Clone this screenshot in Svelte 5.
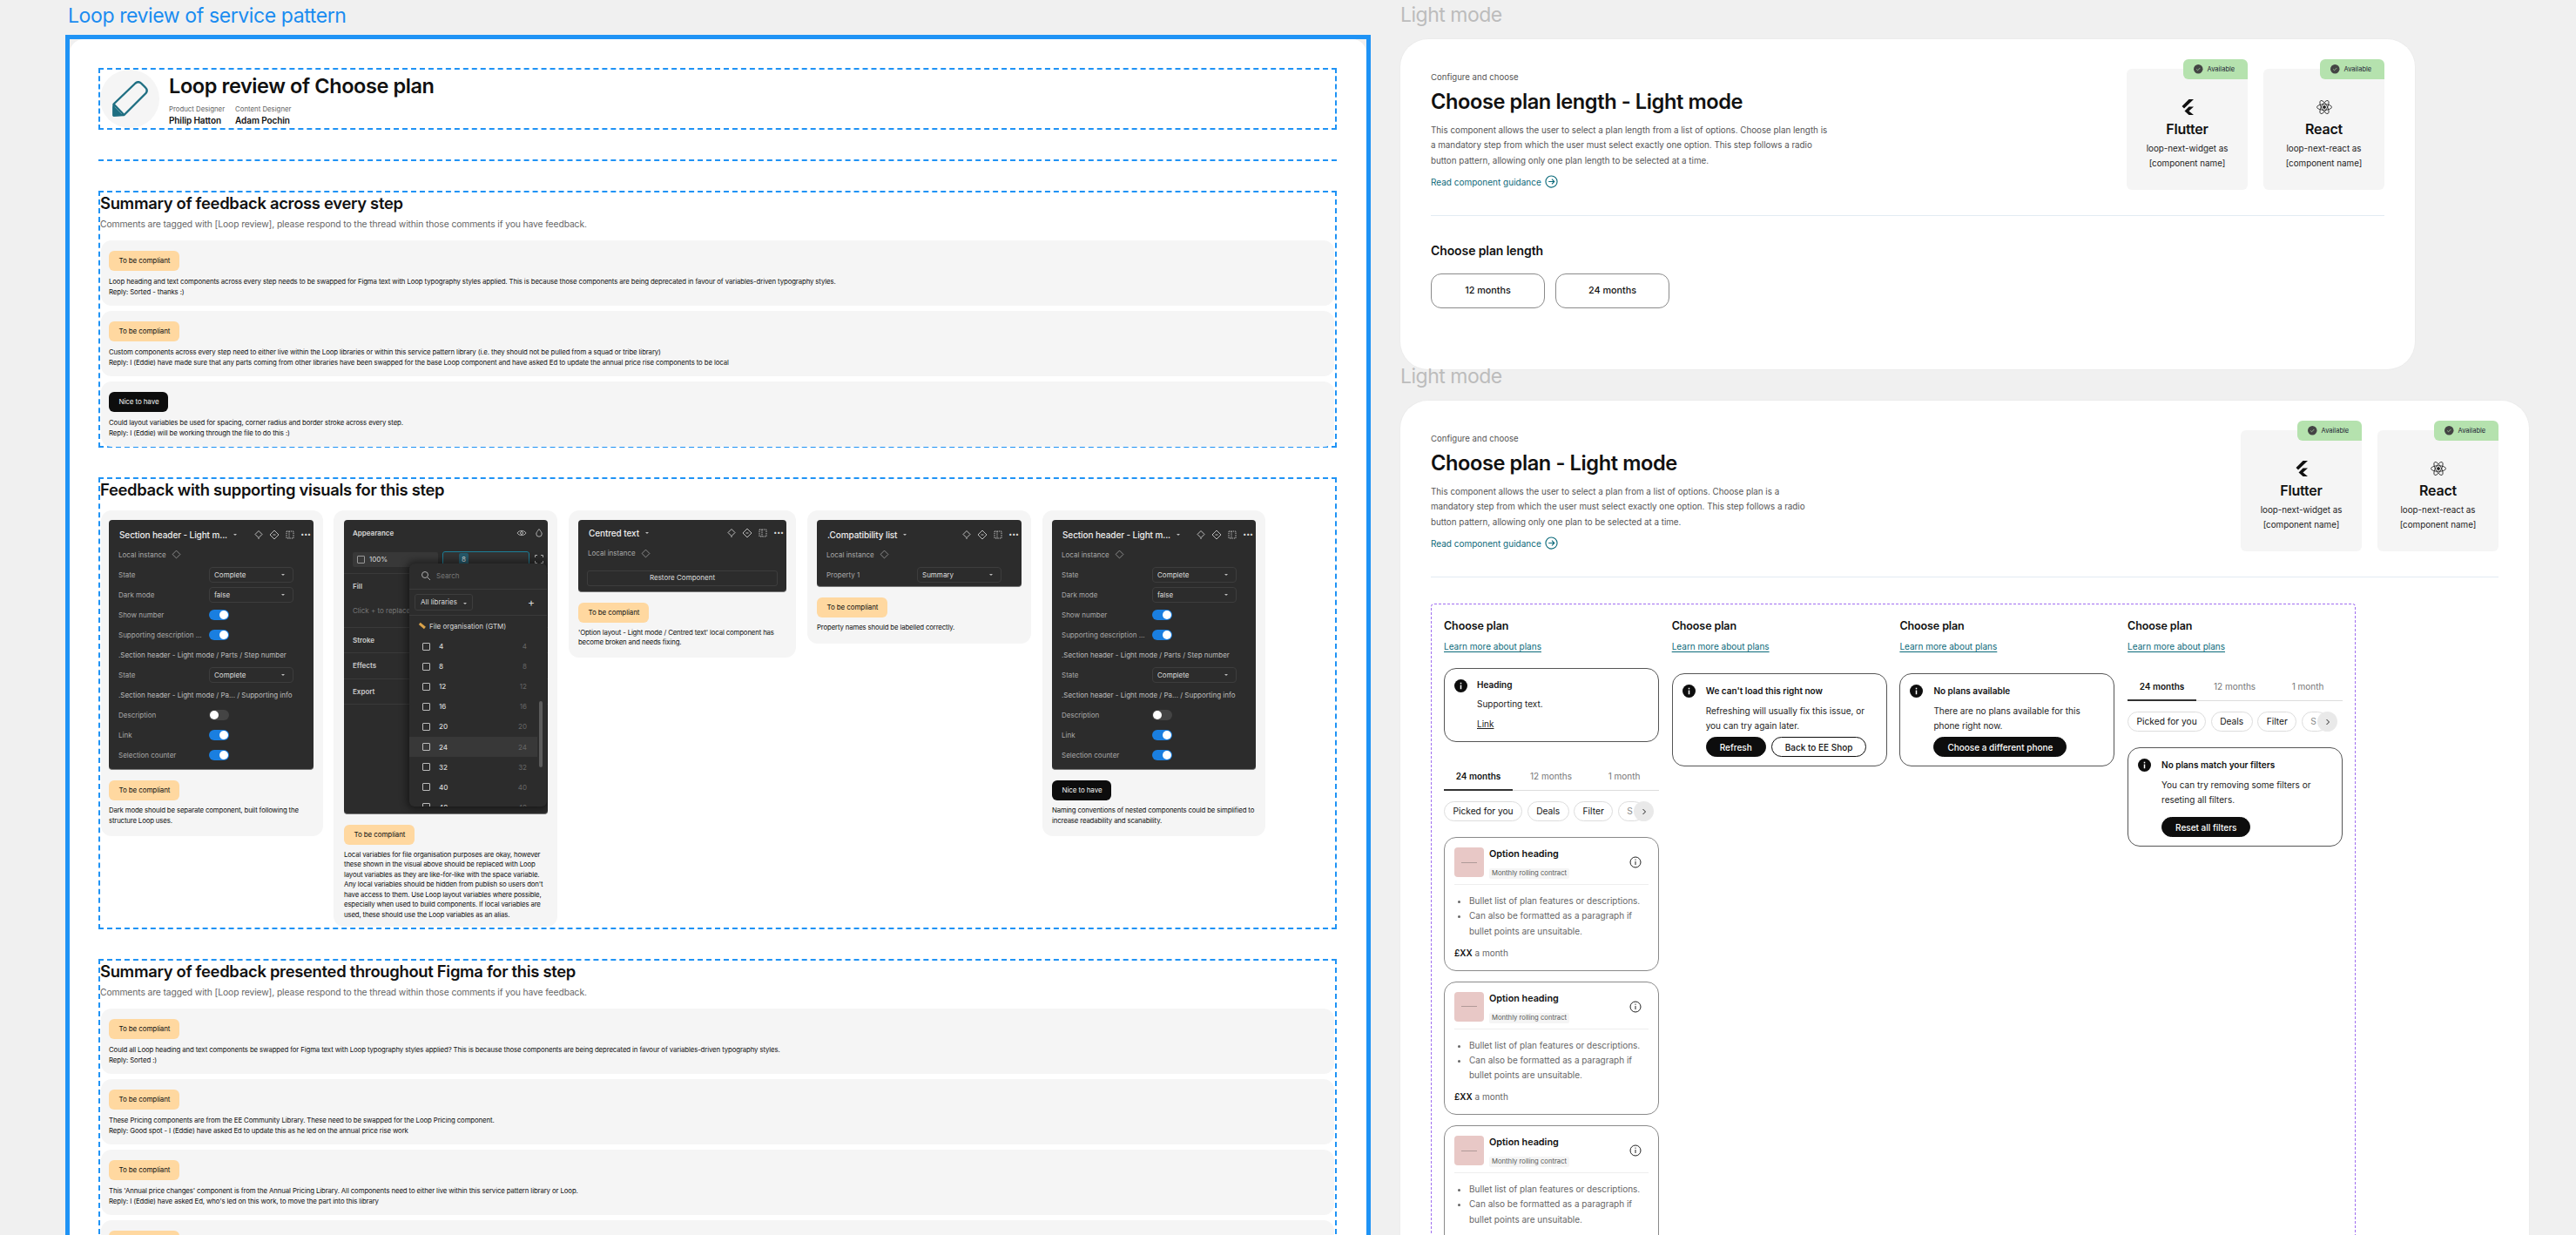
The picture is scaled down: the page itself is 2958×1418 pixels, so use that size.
<script lang="ts">
  type Row = { kind: 'select' | 'toggle' | 'nested' | 'plain'; label: string; value?: string; on?: boolean };

  const summaryAll = [
    { tag: 'warn', lines: ['Loop heading and text components across every step needs to be swapped for Figma text with Loop typography styles applied. This is because those components are being deprecated in favour of variables-driven typography styles.', 'Reply: Sorted - thanks :)'] },
    { tag: 'warn', lines: ['Custom components across every step need to either live within the Loop libraries or within this service pattern library (i.e. they should not be pulled from a squad or tribe library)', 'Reply: I (Eddie) have made sure that any parts coming from other libraries have been swapped for the base Loop component and have asked Ed to update the annual price rise components to be local'] },
    { tag: 'nice', lines: ['Could layout variables be used for spacing, corner radius and border stroke across every step.', 'Reply: I (Eddie) will be working through the file to do this :)'] }
  ];

  const summaryStep = [
    { tag: 'warn', lines: ['Could all Loop heading and text components be swapped for Figma text with Loop typography styles applied? This is because those components are being deprecated in favour of variables-driven typography styles.', 'Reply: Sorted :)'] },
    { tag: 'warn', lines: ['These Pricing components are from the EE Community Library. These need to be swapped for the Loop Pricing component.', 'Reply: Good spot - I (Eddie) have asked Ed to update this as he led on the annual price rise work'] },
    { tag: 'warn', lines: ["This 'Annual price changes' component is from the Annual Pricing Library. All components need to either live within this service pattern library or Loop.", "Reply: I (Eddie) have asked Ed, who's led on this work, to move the part into this library"] },
    { tag: 'warn', lines: [] }
  ];

  const sectionRows: Row[] = [
    { kind: 'plain', label: 'Local instance' },
    { kind: 'select', label: 'State', value: 'Complete' },
    { kind: 'select', label: 'Dark mode', value: 'false' },
    { kind: 'toggle', label: 'Show number', on: true },
    { kind: 'toggle', label: 'Supporting description ...', on: true },
    { kind: 'nested', label: '.Section header - Light mode / Parts / Step number' },
    { kind: 'select', label: 'State', value: 'Complete' },
    { kind: 'nested', label: '.Section header - Light mode / Pa... / Supporting info' },
    { kind: 'toggle', label: 'Description', on: false },
    { kind: 'toggle', label: 'Link', on: true },
    { kind: 'toggle', label: 'Selection counter', on: true }
  ];

  const sizes = [4, 8, 12, 16, 20, 24, 32, 40, 48];
  const planCards = [0, 1, 2];
</script>

{#snippet badge(tag: string)}
  <span class="badge {tag}">{tag === 'warn' ? 'To be compliant' : 'Nice to have'}</span>
{/snippet}

{#snippet feedbackList(items: { tag: string; lines: string[] }[])}
  <div class="feedback-list">
    {#each items as item}
      <div class="feedback">
        {@render badge(item.tag)}
        <div class="feedback-text">
          {#each item.lines as line}
            <p>{line}</p>
          {/each}
        </div>
      </div>
    {/each}
  </div>
{/snippet}

{#snippet headerIcons()}
  <span class="head-icons">
    <svg viewBox="0 0 12 12"><path d="M6 1.500 10 5.500 6 9.500 2 5.500Z M6 9.500V11" /></svg>
    <svg viewBox="0 0 12 12"><path d="M6 1 11 6 6 11 1 6Z M4.500 6h3" /></svg>
    <svg viewBox="0 0 12 12"><path d="M2 2h8v8H2Z M5 2v8" stroke-dasharray="1.4 1" /></svg>
    <span class="dots">•••</span>
  </span>
{/snippet}

{#snippet diamond()}
  <svg class="diamond" viewBox="0 0 12 12"><path d="M6 1.200 10.800 6 6 10.800 1.200 6Z" /></svg>
{/snippet}

{#snippet panelSection()}
  <div class="panel">
    <div class="panel-head"><b>Section header - Light m...</b><i class="caret"></i>{@render headerIcons()}</div>
    {#each sectionRows as row}
      <div class="panel-row">
        {#if row.kind === 'nested'}
          <span class="nested">{row.label}</span>
        {:else}
          <span class="row-label">{row.label}</span>
          {#if row.kind === 'plain'}
            {@render diamond()}
          {:else if row.kind === 'select'}
            <span class="select">{row.value}<i class="caret"></i></span>
          {:else}
            <span class="toggle" class:on={row.on}></span>
          {/if}
        {/if}
      </div>
    {/each}
  </div>
{/snippet}

{#snippet infoDot()}
  <svg class="info-dot" viewBox="0 0 16 16"><circle cx="8" cy="8" r="8" fill="#0d0d0d" /><rect x="7.200" y="7" width="1.600" height="5" fill="#fff" /><rect x="7.200" y="4" width="1.600" height="1.700" fill="#fff" /></svg>
{/snippet}

{#snippet tabs()}
  <div class="tabs">
    <span class="tab active">24 months</span>
    <span class="tab">12 months</span>
    <span class="tab">1 month</span>
  </div>
  <div class="chips">
    <span class="chip">Picked for you</span>
    <span class="chip">Deals</span>
    <span class="chip">Filter</span>
    <span class="chip cut">S</span>
    <span class="chip-next"><svg viewBox="0 0 10 10"><path d="M3.500 2 6.500 5 3.500 8" /></svg></span>
  </div>
{/snippet}

{#snippet colHead()}
  <h5>Choose plan</h5>
  <span class="learn">Learn more about plans</span>
{/snippet}

{#snippet heroCopy(title: string, copy: string)}
  <div class="hero-copy">
    <p class="eyebrow">Configure and choose</p>
    <h2>{title}</h2>
    <p class="desc">{copy}</p>
    <span class="guidance">Read component guidance
      <svg viewBox="0 0 16 16"><circle cx="8" cy="8" r="7" /><path d="M4.500 8h7M8.500 5l3 3-3 3" /></svg>
    </span>
  </div>
{/snippet}

{#snippet tile(name: string, pkg: string)}
  <div class="tile">
    <span class="available">
      <svg viewBox="0 0 12 12"><circle cx="6" cy="6" r="6" fill="#444" /><path d="M3.600 6.200 5.200 7.800l3.200-3.300" fill="none" stroke="#b5e2ae" stroke-width=".8" /></svg>
      Available
    </span>
    {#if name === 'Flutter'}
      <svg class="tile-icon" viewBox="0 0 14 18"><path d="M8.500 0H14L3 10.500.5 8Z M8.500 8.500H14L8.500 13.500 14 18H8.500L3.500 13.500Z" fill="#111" /></svg>
    {:else}
      <svg class="tile-icon" viewBox="0 0 18 18" fill="none" stroke="#222" stroke-width=".8"><ellipse cx="9" cy="9" rx="8.500" ry="3.300" /><ellipse cx="9" cy="9" rx="8.500" ry="3.300" transform="rotate(60 9 9)" /><ellipse cx="9" cy="9" rx="8.500" ry="3.300" transform="rotate(120 9 9)" /><circle cx="9" cy="9" r="1.500" fill="#222" /></svg>
    {/if}
    <strong>{name}</strong>
    <p>{pkg} as<br />[component name]</p>
  </div>
{/snippet}

<div class="canvas">
  <div class="review-col">
    <p class="frame-label">Loop review of service pattern</p>
    <div class="review-frame">
      <div class="review-inner">
        <section class="dash intro">
          <span class="intro-icon">
            <svg viewBox="0 0 41 41" fill="none" stroke="#1f6f82" stroke-width="2.400" stroke-linejoin="round"><path d="M1.500 26.500 26.500 2.500c2.500-2 5-1.500 7 .5l4.500 4.500c2 2 2 4.500.5 6.500L13.500 39 1.500 39.500Z" /><path d="M1.500 26.500 13.500 39" /><path d="M1.500 30 10 38.800 1.500 39.500Z" fill="#1f6f82" /></svg>
          </span>
          <div>
            <h1>Loop review of Choose plan</h1>
            <div class="people">
              <div><small>Product Designer</small><b>Philip Hatton</b></div>
              <div><small>Content Designer</small><b>Adam Pochin</b></div>
            </div>
          </div>
        </section>

        <div class="dash-line"></div>

        <section class="dash">
          <h3>Summary of feedback across every step</h3>
          <p class="note">Comments are tagged with [Loop review], please respond to the thread within those comments if you have feedback.</p>
          {@render feedbackList(summaryAll)}
        </section>

        <section class="dash visuals">
          <h3>Feedback with supporting visuals for this step</h3>
          <div class="visual-row">
            <div class="visual v1">
              {@render panelSection()}
              {@render badge('warn')}
              <p>Dark mode should be separate component, built following the structure Loop uses.</p>
            </div>

            <div class="visual v2">
              <div class="panel appearance">
                <div class="app-head"><b>Appearance</b>
                  <svg viewBox="0 0 12 12"><path d="M1 6c2-3.500 8-3.500 10 0-2 3.500-8 3.500-10 0Z" /><circle cx="6" cy="6" r="1.500" /></svg>
                  <svg viewBox="0 0 12 12"><path d="M6 1.500c2 2.500 3.200 4 3.200 5.500a3.200 3.200 0 0 1-6.400 0C2.800 5.500 4 4 6 1.500Z" /></svg>
                </div>
                <div class="app-fields">
                  <span class="field"><i class="sq"></i>100%</span>
                  <span class="field radius"><em>8</em></span>
                  <svg viewBox="0 0 12 12"><path d="M1.500 4V1.500H4M8 1.500h2.500V4M10.500 8v2.500H8M4 10.500H1.500V8" /></svg>
                </div>
                <div class="app-sec fill"><b>Fill</b><span>Click + to replace</span></div>
                <div class="app-sec"><b>Stroke</b></div>
                <div class="app-sec"><b>Effects</b></div>
                <div class="app-sec"><b>Export</b></div>
                <div class="popup">
                  <div class="pop-search"><svg viewBox="0 0 12 12"><circle cx="5" cy="5" r="3.500" /><path d="m8 8 3 3" /></svg>Search</div>
                  <div class="pop-libs"><span class="libs">All libraries<i class="caret"></i></span><span class="plus">+</span></div>
                  <div class="pop-list">
                    <div class="pop-title"><span class="pen"></span>File organisation (GTM)</div>
                    {#each sizes as size}
                      <div class="pop-item" class:hover={size === 24}><i class="sq num"></i><b>{size}</b><span>{size}</span></div>
                    {/each}
                    <span class="scroll"></span>
                  </div>
                </div>
              </div>
              {@render badge('warn')}
              <p>Local variables for file organisation purposes are okay, however these shown in the visual above should be replaced with Loop layout variables as they are like-for-like with the space variable. Any local variables should be hidden from publish so users don't have access to them. Use Loop layout variables where possible, especially when used to build components. If local variables are used, these should use the Loop variables as an alias.</p>
            </div>

            <div class="visual v3">
              <div class="panel short">
                <div class="panel-head tight"><b>Centred text</b><i class="caret"></i>{@render headerIcons()}</div>
                <div class="panel-row"><span class="row-label">Local instance</span>{@render diamond()}</div>
                <div class="restore">Restore Component</div>
              </div>
              {@render badge('warn')}
              <p>'Option layout - Light mode / Centred text' local component has become broken and needs fixing.</p>
            </div>

            <div class="visual v4">
              <div class="panel compat">
                <div class="panel-head"><b>.Compatibility list</b><i class="caret"></i>{@render headerIcons()}</div>
                <div class="panel-row"><span class="row-label">Local instance</span>{@render diamond()}</div>
                <div class="panel-row"><span class="row-label">Property 1</span><span class="select">Summary<i class="caret"></i></span></div>
              </div>
              {@render badge('warn')}
              <p>Property names should be labelled correctly.</p>
            </div>

            <div class="visual v5">
              {@render panelSection()}
              {@render badge('nice')}
              <p>Naming conventions of nested components could be simplified to increase readability and scanability.</p>
            </div>
          </div>
        </section>

        <section class="dash">
          <h3>Summary of feedback presented throughout Figma for this step</h3>
          <p class="note">Comments are tagged with [Loop review], please respond to the thread within those comments if you have feedback.</p>
          {@render feedbackList(summaryStep)}
        </section>
      </div>
    </div>
  </div>

  <div class="light-col">
    <p class="mode-label">Light mode</p>
    <div class="doc-card first">
      <div class="hero">
        {@render heroCopy('Choose plan length - Light mode', 'This component allows the user to select a plan length from a list of options. Choose plan length is a mandatory step from which the user must select exactly one option. This step follows a radio button pattern, allowing only one plan length to be selected at a time.')}
        <div class="tiles">
          {@render tile('Flutter', 'loop-next-widget')}
          {@render tile('React', 'loop-next-react')}
        </div>
      </div>
      <h4>Choose plan length</h4>
      <div class="lengths">
        <span>12 months</span>
        <span>24 months</span>
      </div>
    </div>

    <p class="mode-label second">Light mode</p>
    <div class="doc-card">
      <div class="hero">
        {@render heroCopy('Choose plan - Light mode', 'This component allows the user to select a plan from a list of options. Choose plan is a mandatory step from which the user must select exactly one option. This step follows a radio button pattern, allowing only one plan to be selected at a time.')}
        <div class="tiles">
          {@render tile('Flutter', 'loop-next-widget')}
          {@render tile('React', 'loop-next-react')}
        </div>
      </div>

      <div class="variants">
        <div class="col">
          {@render colHead()}
          <div class="alert first-alert">
            {@render infoDot()}
            <b>Heading</b>
            <p>Supporting text.</p>
            <u>Link</u>
          </div>
          <div class="tab-gap"></div>
          {@render tabs()}
          {#each planCards as _}
            <div class="option">
              <div class="option-top">
                <span class="thumb"><i></i></span>
                <div class="option-title"><b>Option heading</b><span>Monthly rolling contract</span></div>
                <svg class="option-info" viewBox="0 0 14 14"><circle cx="7" cy="7" r="6" /><path d="M7 6v4M7 3.600v1.200" /></svg>
              </div>
              <ul>
                <li>Bullet list of plan features or descriptions.</li>
                <li>Can also be formatted as a paragraph if bullet points are unsuitable.</li>
              </ul>
              <p class="price"><b>£XX</b> a month</p>
            </div>
          {/each}
        </div>

        <div class="col">
          {@render colHead()}
          <div class="alert">
            {@render infoDot()}
            <b>We can't load this right now</b>
            <p>Refreshing will usually fix this issue, or you can try again later.</p>
            <div class="alert-actions"><span class="btn">Refresh</span><span class="btn outline">Back to EE Shop</span></div>
          </div>
        </div>

        <div class="col">
          {@render colHead()}
          <div class="alert">
            {@render infoDot()}
            <b>No plans available</b>
            <p>There are no plans available for this phone right now.</p>
            <div class="alert-actions"><span class="btn">Choose a different phone</span></div>
          </div>
        </div>

        <div class="col">
          {@render colHead()}
          <div class="tab-gap wide"></div>
          {@render tabs()}
          <div class="alert filters">
            {@render infoDot()}
            <b>No plans match your filters</b>
            <p>You can try removing some filters or reseting all filters.</p>
            <div class="alert-actions roomy"><span class="btn">Reset all filters</span></div>
          </div>
        </div>
      </div>
    </div>
  </div>
</div>

<style>
  :global(body) {
    margin: 0;
    background: #f0f0f0;
  }

  .canvas {
    width: 2958px;
    height: 1418px;
    overflow: hidden;
    display: flex;
    font-family: Inter, 'Liberation Sans', sans-serif;
    color: #111;
    background: #f0f0f0;
  }

  p,
  h1,
  h2,
  h3,
  h4,
  h5,
  ul {
    margin: 0;
    padding: 0;
  }

  i,
  em {
    font-style: normal;
  }

  /* left column */
  .review-col {
    width: 1499px;
    margin-left: 75px;
    flex: none;
  }

  .frame-label {
    height: 40px;
    padding-left: 3px;
    font-size: 23px;
    line-height: 36px;
    letter-spacing: -0.4px;
    color: #1a8cf0;
  }

  .review-frame {
    border: 5px solid #1f93f5;
    background: #f0f0f0;
  }

  .review-inner {
    padding: 33px 34px 0 33px;
    background: #fff;
    border-radius: 16px 16px 0 0;
    display: flex;
    flex-direction: column;
    gap: 34px;
  }

  .dash {
    border: 2px dashed #1f93f5;
    box-sizing: border-box;
    margin: 0;
  }

  .dash-line {
    border-top: 2px dashed #1f93f5;
  }

  .intro {
    height: 71px;
    display: flex;
    gap: 11px;
  }

  .intro-icon {
    width: 68px;
    height: 67px;
    border-radius: 50%;
    background: #f5f5f5;
    display: flex;
    align-items: center;
    justify-content: center;
    flex: none;
  }

  .intro-icon svg {
    width: 41px;
    height: 41px;
  }

  h1 {
    font-size: 23.500px;
    line-height: 38px;
    font-weight: 600;
    letter-spacing: -0.4px;
  }

  .people {
    display: flex;
    gap: 12px;
    margin-top: 2px;
  }

  .people small {
    display: block;
    font-size: 7.800px;
    line-height: 11px;
    color: #666;
  }

  .people b {
    display: block;
    font-size: 10px;
    line-height: 15px;
    font-weight: 600;
    letter-spacing: -0.1px;
  }

  h3 {
    font-size: 18.400px;
    line-height: 25px;
    font-weight: 600;
    letter-spacing: -0.3px;
    margin: 0;
  }

  .note {
    font-size: 10.300px;
    line-height: 22px;
    color: #666;
    letter-spacing: -0.1px;
  }

  .feedback-list {
    display: flex;
    flex-direction: column;
    gap: 6px;
    margin: 8px 1px -1px;
  }

  .feedback {
    height: 75px;
    box-sizing: border-box;
    padding: 12px 9px 0;
    background: #f5f5f5;
    border-radius: 12px;
  }

  .feedback-text {
    margin-top: 7px;
    font-size: 7.800px;
    line-height: 11.600px;
    letter-spacing: -0.11px;
  }

  .badge {
    display: inline-block;
    height: 23px;
    line-height: 23px;
    padding: 0 0 0 11.500px;
    box-sizing: border-box;
    border-radius: 6px;
    font-size: 8px;
    letter-spacing: -0.1px;
    vertical-align: top;
    white-space: nowrap;
  }

  .badge.warn {
    background: #ffd8a0;
    width: 81px;
  }

  .badge.nice {
    background: #0d0d0d;
    color: #f2f2f2;
    width: 68px;
  }

  .visuals {
    height: 519px;
  }

  .visual-row {
    display: flex;
    align-items: flex-start;
    margin: 10.500px 0 0 1px;
    gap: 13px;
  }

  .visual {
    box-sizing: border-box;
    padding: 11px 11px 0;
    background: #f5f5f5;
    border-radius: 12px;
    flex: none;
  }

  .visual > p {
    font-size: 7.800px;
    line-height: 11.600px;
    margin-top: 6px;
    letter-spacing: -0.15px;
  }

  .v1 { width: 255px; height: 374px; padding-left: 9px; margin-right: -1px; }
  .v2 { width: 257px; height: 478px; padding-left: 12px; }
  .v3 { width: 261px; height: 169px; }
  .v4 { width: 257px; height: 153px; }
  .v5 { width: 256px; height: 374px; }

  /* dark property panels */
  .panel {
    position: relative;
    background: #2c2c2c;
    border-radius: 4px;
    border-bottom: 1px solid #777;
    color: #d8d8d8;
    font-size: 8px;
    padding-bottom: 4px;
    margin-bottom: 12px;
  }

  .panel.compat {
    padding-bottom: 2px;
  }

  .panel-head {
    display: flex;
    align-items: center;
    height: 28.500px;
    box-sizing: border-box;
    padding: 6px 0 0 12px;
    font-size: 10px;
    letter-spacing: -0.1px;
  }

  .panel-head.tight {
    height: 27px;
    padding-top: 3px;
  }

  .panel-head b {
    font-weight: 500;
    color: #eee;
  }

  .caret {
    display: inline-block;
    width: 0;
    height: 0;
    margin-left: 7px;
    border: 2px solid transparent;
    border-top: 2.500px solid #bbb;
    border-bottom: 0;
  }

  .head-icons {
    margin-left: auto;
    display: flex;
    align-items: center;
    gap: 6px;
    padding-right: 3px;
  }

  .head-icons svg {
    width: 12px;
    height: 12px;
    fill: none;
    stroke: #ccc;
    stroke-width: 0.9;
  }

  .dots {
    font-size: 7px;
    color: #ddd;
    letter-spacing: 0;
  }

  .panel-row {
    display: flex;
    align-items: center;
    height: 23.100px;
    padding-left: 11px;
    position: relative;
  }

  .row-label {
    width: 104px;
    color: #a8a8a8;
    flex: none;
    white-space: nowrap;
  }

  .panel-row:has(.diamond) .row-label {
    width: auto;
  }

  .diamond {
    width: 11px;
    height: 11px;
    margin-left: 6px;
    fill: none;
    stroke: #aaa;
    stroke-width: 0.8;
  }

  .nested {
    color: #bdbdbd;
    white-space: nowrap;
  }

  .select {
    width: 97px;
    height: 18px;
    box-sizing: border-box;
    display: flex;
    align-items: center;
    justify-content: space-between;
    padding: 0 9px 0 5px;
    border: 1px solid #3d3d3d;
    border-radius: 4px;
    color: #ddd;
  }

  .toggle {
    width: 23px;
    height: 12px;
    border-radius: 6px;
    background: #444;
    position: relative;
  }

  .toggle::after {
    content: '';
    position: absolute;
    left: 1px;
    top: 1px;
    width: 10px;
    height: 10px;
    border-radius: 50%;
    background: #fff;
  }

  .toggle.on {
    background: #1a7fe0;
  }

  .toggle.on::after {
    left: 12px;
  }

  .short {
    height: 78px;
    padding-bottom: 4px;
  }

  .restore {
    margin: 8px 10px 0;
    height: 16px;
    line-height: 15px;
    text-align: center;
    border: 1px solid #3d3d3d;
    border-radius: 3px;
    color: #ddd;
  }

  .appearance {
    height: 333px;
    overflow: hidden;
  }

  .appearance svg {
    fill: none;
    stroke: #bbb;
    stroke-width: 0.9;
    width: 12px;
    height: 12px;
  }

  .app-head {
    display: flex;
    align-items: center;
    gap: 8px;
    height: 30px;
    padding: 0 4px 0 10px;
  }

  .app-head b {
    flex: 1;
    font-weight: 600;
  }

  .app-fields {
    display: flex;
    align-items: center;
    gap: 6px;
    height: 31px;
    padding-left: 10px;
    border-bottom: 1px solid #3a3a3a;
  }

  .field {
    width: 98px;
    height: 17px;
    border-radius: 2px;
    background: #383838;
    display: flex;
    align-items: center;
    gap: 5px;
    padding-left: 5px;
    box-sizing: border-box;
  }

  .field.radius {
    background: #333;
    outline: 1px solid #1d7f99;
    padding-left: 18px;
  }

  .field.radius em {
    padding: 2px 3px;
    background: #26596a;
    border-radius: 2px;
  }

  .sq {
    width: 7px;
    height: 7px;
    border: 1px solid #999;
    border-radius: 1px;
    flex: none;
  }

  .app-sec {
    height: 28.500px;
    padding: 0 10px;
    line-height: 28px;
    border-bottom: 1px solid #3a3a3a;
  }

  .app-sec b {
    font-weight: 600;
    color: #ccc;
  }

  .app-sec.fill {
    height: 61px;
  }

  .app-sec.fill span {
    display: block;
    color: #777;
    white-space: nowrap;
  }

  .popup {
    position: absolute;
    left: 75px;
    top: 50px;
    width: 158px;
    height: 279px;
    background: #2c2c2c;
    border-radius: 6px;
    box-shadow: 0 0 8px 3px rgba(0, 0, 0, 0.45);
    overflow: hidden;
  }

  .pop-search {
    display: flex;
    align-items: center;
    gap: 6px;
    height: 29px;
    padding-left: 13px;
    color: #777;
    border-bottom: 1px solid #3a3a3a;
  }

  .pop-libs {
    display: flex;
    align-items: center;
    justify-content: space-between;
    height: 29px;
    padding: 0 14px 0 6px;
    border-bottom: 1px solid #3a3a3a;
  }

  .libs {
    height: 17px;
    line-height: 16px;
    padding: 0 6px;
    border: 1px solid #3d3d3d;
    border-radius: 3px;
  }

  .plus {
    font-size: 12px;
  }

  .pop-list {
    position: relative;
  }

  .pop-title {
    display: flex;
    align-items: center;
    gap: 4px;
    height: 24px;
    padding-left: 11px;
  }

  .pen {
    width: 8px;
    height: 2.500px;
    background: #d9a24a;
    transform: rotate(40deg);
  }

  .pop-item {
    display: flex;
    align-items: center;
    height: 23.100px;
    padding: 0 24px 0 15px;
    gap: 8px;
    margin-right: 11px;
  }

  .pop-item .num {
    border-color: #bbb;
  }

  .pop-item b {
    flex: 1;
    font-weight: 500;
    margin-left: 2px;
  }

  .pop-item span {
    color: #666;
    margin-right: -12px;
  }

  .pop-item.hover {
    background: #383838;
  }

  .scroll {
    position: absolute;
    right: 5px;
    top: 98px;
    width: 4px;
    height: 76px;
    border-radius: 2px;
    background: #5c5c5c;
  }

  /* right column */
  .light-col {
    margin-left: 34px;
    width: 1296px;
    flex: none;
  }

  .mode-label {
    height: 45px;
    font-size: 23px;
    line-height: 34px;
    letter-spacing: -0.5px;
    color: #bcbcbc;
  }

  .mode-label.second {
    height: 37px;
    line-height: 18px;
    margin-top: -1px;
  }

  .doc-card {
    background: #fff;
    border-radius: 32px;
    padding: 34px 35px 0;
    box-shadow: 0 0 0 1px #ececec;
    width: 100%;
    box-sizing: border-box;
    height: 1000px;
  }

  .doc-card.first {
    width: 1165px;
    height: 379px;
  }

  .hero {
    display: flex;
    justify-content: space-between;
    height: 168px;
    border-bottom: 1.500px solid #e2ebf2;
  }

  .hero-copy {
    padding-top: 3px;
  }

  .eyebrow {
    font-size: 9.600px;
    line-height: 14px;
    color: #555;
  }

  h2 {
    font-size: 23.600px;
    line-height: 28px;
    font-weight: 600;
    letter-spacing: -0.4px;
    margin-top: 7px;
  }

  .desc {
    width: 445px;
    margin-top: 10px;
    font-size: 9.800px;
    line-height: 17.300px;
    color: #555;
  }

  .first .desc {
    width: 460px;
  }

  .guidance {
    display: flex;
    align-items: center;
    gap: 4px;
    margin-top: 8px;
    font-size: 10px;
    line-height: 16px;
    color: #0b6a7a;
  }

  .guidance svg {
    width: 15px;
    height: 15px;
    fill: none;
    stroke: #0b6a7a;
    stroke-width: 1.200;
  }

  .tiles {
    display: flex;
    gap: 18px;
    margin-top: 0;
  }

  .tile {
    position: relative;
    width: 139px;
    height: 139px;
    box-sizing: border-box;
    padding-top: 35px;
    background: #f5f5f5;
    border-radius: 6px;
    text-align: center;
  }

  .tile-icon {
    display: block;
    height: 18px;
    width: 18px;
    margin: 0 auto;
  }

  .tile strong {
    display: block;
    font-size: 16px;
    line-height: 24px;
    font-weight: 600;
    margin-top: 4px;
    letter-spacing: -0.2px;
  }

  .tile p {
    font-size: 9.800px;
    line-height: 17.300px;
    margin-top: 2px;
    color: #222;
  }

  .available {
    position: absolute;
    right: 0;
    top: -11px;
    width: 74px;
    height: 23px;
    box-sizing: border-box;
    padding-left: 12px;
    display: flex;
    align-items: center;
    gap: 5px;
    background: #b5e2ae;
    border-radius: 6px 6px 0 6px;
    font-size: 7.500px;
    color: #223;
  }

  .available svg {
    width: 10.500px;
    height: 10.500px;
  }

  .doc-card h4 {
    font-size: 14px;
    line-height: 18px;
    font-weight: 600;
    margin-top: 31px;
    letter-spacing: -0.1px;
  }

  .lengths {
    display: flex;
    gap: 12px;
    margin-top: 17px;
  }

  .lengths span {
    width: 131px;
    height: 40px;
    box-sizing: border-box;
    line-height: 38px;
    text-align: center;
    font-size: 10.800px;
    font-weight: 500;
    border: 1px solid #8a8a8a;
    border-radius: 12px;
  }

  .variants {
    width: 1062px;
    height: 800px;
    margin-top: 30px;
    box-sizing: border-box;
    padding: 15px 0 0 14px;
    border: 1.200px dashed #a06ef0;
    border-bottom: 0;
    border-radius: 4px 4px 0 0;
    display: grid;
    grid-template-columns: repeat(4, 247px);
    column-gap: 14.700px;
    align-items: start;
  }

  .col h5 {
    font-size: 12.500px;
    line-height: 20px;
    font-weight: 600;
    letter-spacing: -0.1px;
  }

  .learn {
    display: block;
    margin-top: 6px;
    font-size: 10px;
    line-height: 15px;
    color: #0b6a7a;
    text-decoration: underline;
    text-underline-offset: 2px;
  }

  .alert {
    position: relative;
    margin-top: 23px;
    box-sizing: border-box;
    padding: 11px 12px 10px 38px;
    border: 1.200px solid #555;
    border-radius: 14px;
    font-size: 10px;
    line-height: 17.300px;
    color: #222;
  }

  .alert b {
    display: block;
    font-weight: 600;
    font-size: 10px;
    line-height: 17px;
    color: #111;
  }

  .alert p {
    margin-top: 6px;
  }

  .alert u {
    display: block;
    margin-top: 6px;
  }

  .first-alert {
    margin-top: 17px;
    height: 85px;
    padding-top: 10px;
    padding-left: 37px;
  }

  .first-alert p {
    margin-top: 5px;
  }

  .info-dot {
    position: absolute;
    left: 11px;
    top: 12px;
    width: 15px;
    height: 15px;
  }

  .alert-actions {
    display: flex;
    gap: 6px;
    margin-top: 3px;
  }

  .alert-actions.roomy {
    margin-top: 10px;
  }

  .btn {
    height: 23px;
    box-sizing: border-box;
    padding: 0 15px;
    line-height: 22px;
    border-radius: 12px;
    background: #0d0d0d;
    color: #fff;
    font-size: 10px;
    font-weight: 500;
    border: 1px solid #0d0d0d;
    white-space: nowrap;
  }

  .btn.outline {
    background: #fff;
    color: #111;
  }

  .filters {
    margin-top: 18px;
  }

  .tab-gap {
    height: 24px;
  }

  .tab-gap.wide {
    height: 23px;
  }

  .tabs {
    display: grid;
    grid-template-columns: 79px 88px 1fr;
    height: 31px;
    border-bottom: 1px solid #ddd;
    font-size: 10px;
    color: #777;
    text-align: center;
    line-height: 30px;
  }

  .tab.active {
    color: #111;
    font-weight: 600;
    border-bottom: 2px solid #333;
    height: 30px;
  }

  .chips {
    position: relative;
    display: flex;
    gap: 5.500px;
    margin-top: 12px;
    height: 23px;
    width: 241px;
    overflow: hidden;
  }

  .chip {
    height: 23px;
    box-sizing: border-box;
    padding: 0 9.500px;
    line-height: 21px;
    border: 1px solid #ddd;
    border-radius: 12px;
    font-size: 10.200px;
    white-space: nowrap;
    flex: none;
  }

  .chip.cut {
    color: #888;
    width: 30px;
  }

  .chip-next {
    position: absolute;
    right: 0;
    top: 0;
    width: 23px;
    height: 23px;
    border-radius: 50%;
    background: #e9e9e9;
    display: flex;
    align-items: center;
    justify-content: center;
  }

  .chip-next svg {
    width: 10px;
    height: 10px;
    fill: none;
    stroke: #222;
    stroke-width: 1;
  }

  .option {
    height: 153.500px;
    box-sizing: border-box;
    margin-top: 12px;
    padding: 11px 11px 0;
    border: 1px solid #8a8a8a;
    border-radius: 14px;
  }

  .chips + .option {
    margin-top: 18px;
  }

  .option-top {
    display: flex;
    gap: 6px;
    height: 42px;
    border-bottom: 1px solid #eee;
  }

  .thumb {
    width: 34px;
    height: 34px;
    background: #e8c8c6;
    border-radius: 4px;
    display: flex;
    align-items: center;
    justify-content: center;
    flex: none;
  }

  .thumb i {
    width: 18px;
    height: 1px;
    background: #b09a98;
  }

  .option-title {
    flex: 1;
  }

  .option-title b {
    display: block;
    font-size: 10.800px;
    line-height: 16px;
    font-weight: 600;
  }

  .option-title span {
    display: inline-block;
    padding: 0 3px;
    margin-top: 1px;
    background: #f5f5f5;
    border-radius: 2px;
    font-size: 7.700px;
    line-height: 12px;
    color: #555;
  }

  .option-info {
    width: 14px;
    height: 14px;
    margin: 10px 8px 0 0;
    fill: none;
    stroke: #222;
    stroke-width: 1;
  }

  .option ul {
    margin-top: 10px;
    padding-left: 17px;
    font-size: 10px;
    line-height: 17.300px;
    color: #666;
  }

  .price {
    margin-top: 8px;
    font-size: 10px;
    line-height: 16px;
    color: #666;
  }

  .price b {
    color: #111;
    font-weight: 600;
  }
</style>
